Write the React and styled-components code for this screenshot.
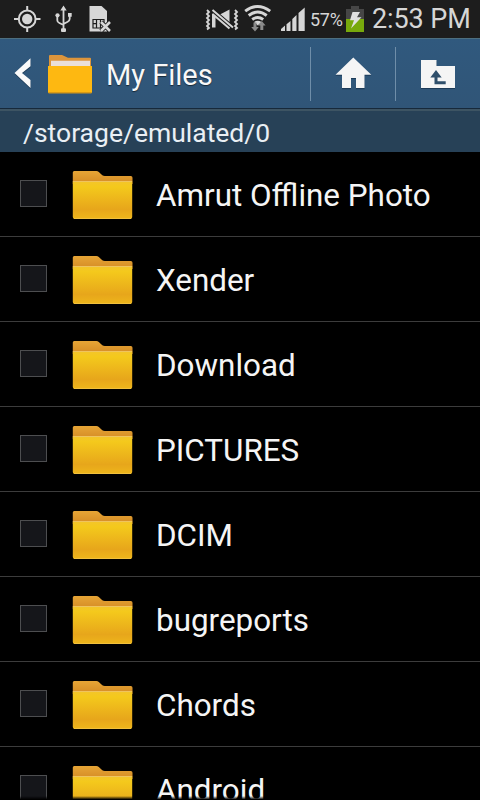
import React from 'react';
import styled, { createGlobalStyle } from 'styled-components';

const GlobalStyle = createGlobalStyle`
  * {
    box-sizing: border-box;
  }

  body {
    margin: 0;
    background: #000000;
    font-family: Roboto, "Noto Sans", sans-serif;
  }
`;

const Screen = styled.div`
  position: relative;
  display: flex;
  flex-direction: column;
  width: 480px;
  height: 800px;
  overflow: hidden;
  background: #000000;
`;

const StatusBar = styled.div`
  display: flex;
  flex: none;
  height: 38px;
  background: #1d1d1d;
  color: #d6d6d6;
`;

const StatusIcon = styled.svg`
  display: block;
  flex: none;
  width: ${props => props.$width}px;
  height: 38px;
`;

const StatusSpacer = styled.div`
  flex: 1;
`;

const Percent = styled.span`
  width: 34px;
  font-size: 18px;
  line-height: 39px;
  letter-spacing: -0.3px;
  white-space: nowrap;
`;

const Clock = styled.span`
  width: 114px;
  padding-left: 6px;
  font-size: 27px;
  line-height: 38px;
  letter-spacing: -0.1px;
  white-space: nowrap;
`;

const Header = styled.div`
  display: flex;
  flex: none;
  height: 71px;
  border-top: 1px solid #4d6f80;
  border-bottom: 1px solid #17293a;
  background: linear-gradient(#30597e, #305577);
`;

const HeaderIcon = styled.svg`
  display: block;
  flex: none;
  width: ${props => props.$width}px;
  height: 69px;
`;

const Title = styled.h1`
  flex: 1;
  margin: 0 0 0 -1px;
  font-size: 29px;
  font-weight: 400;
  line-height: 72px;
  color: #f8f8f8;
  text-shadow: 0 1px 1px rgba(0, 0, 0, 0.55);
  white-space: nowrap;
`;

const Action = styled.div`
  display: flex;
  width: 85px;
  height: 69px;

  &::before {
    content: '';
    width: 1px;
    height: 54px;
    margin-top: 8px;
    background: #6f8ea9;
  }
`;

const PathBar = styled.div`
  flex: none;
  height: 43px;
  padding-left: 23px;
  border-top: 2px solid #3d5463;
  background: #274157;
  font-size: 26.5px;
  line-height: 43px;
  color: #e9eff4;
  white-space: nowrap;
`;

const FileList = styled.ul`
  margin: 0;
  padding: 0;
  list-style: none;
`;

const Row = styled.li`
  display: flex;
  height: 85px;
  padding-left: 20px;
  border-bottom: 1px solid #3c3c3c;
`;

const Checkbox = styled.span`
  width: 27px;
  height: 27px;
  margin-top: 28px;
  border: 1px solid #4d4e50;
  background: #15161a;
`;

const FolderIcon = styled.svg`
  display: block;
  width: 62px;
  height: 50px;
  margin: 18px 0 0 25px;
`;

const FileName = styled.span`
  margin-left: 22px;
  font-size: 31.4px;
  line-height: 87px;
  color: #f5f5f5;
  white-space: nowrap;
`;

const BottomFade = styled.div`
  position: absolute;
  right: 0;
  bottom: 0;
  left: 0;
  height: 4px;
  background: linear-gradient(rgba(0, 0, 0, 0), #000000 85%);
`;

const files = [
  'Amrut Offline Photo',
  'Xender',
  'Download',
  'PICTURES',
  'DCIM',
  'bugreports',
  'Chords',
  'Android',
];

const LeftIcons = () => (
  <StatusIcon $width={120} viewBox="0 0 120 38" fill="none" stroke="#d6d6d6">
    <circle cx="27.2" cy="19" r="8.4" strokeWidth="2" />
    <circle cx="27.2" cy="19" r="5.2" fill="#d6d6d6" stroke="none" />
    <path d="M27.2 6v5M27.2 27v5M14 19h5M35.5 19h5" strokeWidth="2" />
    <path d="M63.5 9v21M57.3 16v4.2q0 2 2 2.8l4.2 2M69.7 15v3.8q0 2-2 3l-4.2 2.2" strokeWidth="1.8" />
    <path d="M63.5 5.5l3.2 5h-6.4zM68 13h3.7v3.7H68z" fill="#d6d6d6" stroke="none" />
    <circle cx="57.5" cy="15.3" r="2.1" fill="#d6d6d6" stroke="none" />
    <rect x="61" y="28.2" width="5" height="3.7" rx="1" fill="#d6d6d6" stroke="none" />
    <path d="M89.5 6h12l5.5 5v20.500H89.500z" fill="#d6d6d6" stroke="none" />
    <path d="M93 19.500h11v8.500H93zM93 23.700h3.500M100.500 23.700h3.500M96.500 19.500v8.500M100.500 19.500v8.500" stroke="#1d1d1d" strokeWidth="1.200" />
    <path d="M101 22l9 9M110 22l-9 9" stroke="#1d1d1d" strokeWidth="4.500" />
    <path d="M101 22l9 9M110 22l-9 9" strokeWidth="2.600" />
  </StatusIcon>
);

const RightIcons = () => (
  <StatusIcon $width={106} viewBox="204 0 106 38" fill="none" stroke="#d6d6d6">
    <path d="M207 10l2 2-2 2 2 2-2 2 2 2-2 2 2 2-2 2 2 2-2 1.500M235 10l2 2-2 2 2 2-2 2 2 2-2 2 2 2-2 2 2 2-2 1.500" strokeWidth="1.800" />
    <path d="M212 13.500h3.500v14H212zM219 15l10.500-5.500v14z" fill="#d6d6d6" stroke="none" />
    <path d="M212.500 10.500l20 17" stroke="#1d1d1d" strokeWidth="4.500" />
    <path d="M212.500 10l20.500 17.500M212.500 14l17 14.500" strokeWidth="2" />
    <path d="M245.200 11.200q12.300-9.500 25 0M248.700 15.500q9-7 18 0M252.200 19.500q5.500-4 11 0" strokeWidth="2.900" />
    <path d="M254 22q3.700-2.600 7.500 0l-3.700 3.400z" fill="#d6d6d6" stroke="none" />
    <path d="M253.500 22.500h3v4.500h2.300l-3.800 4.500-3.800-4.500h2.300zM260.300 30h3v-4.500h2.300l-3.800-4.500-3.800 4.500h2.300z" fill="#8a8a8a" stroke="none" />
    <path d="M281 31v-2l4-3.400V31zM286.500 31v-6.700l4-3.400V31zM292.300 31V19l4.200-4v16zM298.500 31V13l6.200-5.500V31z" fill="#d6d6d6" stroke="none" />
  </StatusIcon>
);

const Battery = () => (
  <StatusIcon $width={22} viewBox="344 0 22 38">
    <path d="M351 6h8v3h5v23h-18V9h5z" fill="#464646" />
    <path d="M346 19h18v13h-18z" fill="#78a90c" />
    <path d="M352.500 12h7.500l-3 5.200h4.500L351 28.500l3-8.300h-4z" fill="#e0e0e0" />
  </StatusIcon>
);

const BackArrow = () => (
  <HeaderIcon $width={48} viewBox="0 39 48 69">
    <path d="M30.500 59.500v8L22 74l8.500 7v8L14.500 74z" fill="#132c43" opacity="0.6" />
    <path d="M30.500 58.300v8L22 73l8.500 7v8L14.500 73z" fill="#fafafa" />
  </HeaderIcon>
);

const AppIcon = () => (
  <HeaderIcon $width={59} viewBox="48 39 59 69">
    <path d="M49 56q0-1 1-1h12l6 2.700h22q1 0 1 1V70H49z" fill="#dc953c" />
    <path d="M51 60.700h39V68H51z" fill="#eadfd9" />
    <path d="M48 66h44v26q0 1.300-1.300 1.300H49.300Q48 93.300 48 92z" fill="#feb811" />
    <path d="M48.500 92.800h43" stroke="#c98c16" />
  </HeaderIcon>
);

const HomeIcon = () => (
  <HeaderIcon $width={84} viewBox="311 39 84 69">
    <path d="M353.300 58.700l18 17H364.500v13.500H356V79h-5v10.200h-9V75.700h-6.500z" fill="#16314a" opacity="0.7" />
    <path d="M353.300 57.500l18 17.200H364.500V88H356V78h-5v10h-9V74.700h-6.500z" fill="#f5f5f5" />
  </HeaderIcon>
);

const UpIcon = () => (
  <HeaderIcon $width={84} viewBox="396 39 84 69">
    <path d="M421 61h15.500v6H455v22h-34z" fill="#16314a" opacity="0.7" />
    <path d="M421 60h15.500v6H455v22h-34z" fill="#f5f5f5" />
    <path d="M436 70l5.700 7.500h-4.200v3.800h8.200v3h-11.200v-6.800h-4.200z" fill="#2f4f6b" />
  </HeaderIcon>
);

const Folder = () => (
  <FolderIcon viewBox="72 170 62 50">
    <defs>
      <linearGradient id="front" x1="0" y1="0" x2="0" y2="1">
        <stop offset="0" stopColor="#f3c52b" />
        <stop offset="0.15" stopColor="#f4c91c" />
        <stop offset="0.75" stopColor="#e7a61b" />
        <stop offset="1" stopColor="#eeb61b" />
      </linearGradient>
      <linearGradient id="back" x1="0" y1="0" x2="0" y2="1">
        <stop offset="0" stopColor="#e6a536" />
        <stop offset="1" stopColor="#d58b24" />
      </linearGradient>
    </defs>
    <path d="M72.800 172.500q0-1.500 1.500-1.500h22q1.500 0 2.500 1l3.500 3.200q1 .8 2.500.8h26q1.700 0 1.700 1.700V184H72.800z" fill="url(#back)" />
    <path d="M72.800 181h59.400v36q0 2-2 2H74.800q-2 0-2-2z" fill="url(#front)" />
    <path d="M73 181.500h59" stroke="#efc45e" />
    <path d="M74 218.500h57" stroke="#f2c03c" />
  </FolderIcon>
);

const App = () => (
  <Screen>
    <GlobalStyle />
    <StatusBar>
      <LeftIcons />
      <StatusSpacer />
      <RightIcons />
      <Percent>57%</Percent>
      <Battery />
      <Clock>2:53 PM</Clock>
    </StatusBar>
    <Header>
      <BackArrow />
      <AppIcon />
      <Title>My Files</Title>
      <Action>
        <HomeIcon />
      </Action>
      <Action>
        <UpIcon />
      </Action>
    </Header>
    <PathBar>/storage/emulated/0</PathBar>
    <FileList>
      {files.map(name => (
        <Row key={name}>
          <Checkbox />
          <Folder />
          <FileName>{name}</FileName>
        </Row>
      ))}
    </FileList>
    <BottomFade />
  </Screen>
);

export default App;
